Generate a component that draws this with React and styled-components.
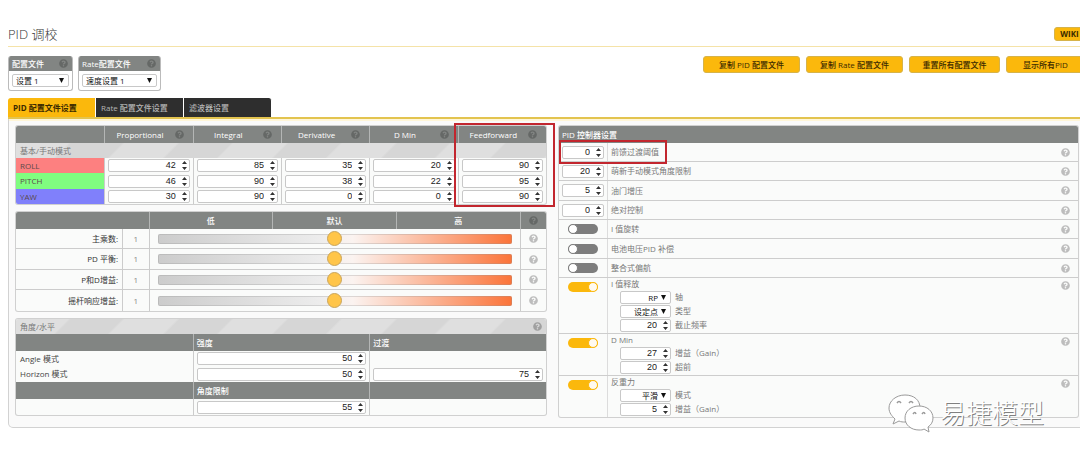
import { useState } from 'react'
import styled, { createGlobalStyle, css } from 'styled-components'
import { FaQuestionCircle } from 'react-icons/fa'

const axes = [
  { name: 'ROLL',  color: '#fd8080', values: [42, 85, 35, 20, 90] },
  { name: 'PITCH', color: '#80fd80', values: [46, 90, 38, 22, 95] },
  { name: 'YAW',   color: '#8080fb', values: [30, 90, 0, 0, 90] },
]
const terms = ['Proportional', 'Integral', 'Derivative', 'D Min', 'Feedforward']
const sliders = ['主乘数:', 'PD 平衡:', 'P和D增益:', '摇杆响应增益:']

const limits = [
  { id: 'ff', label: '前馈过渡阈值', value: 0 },
  { id: 'angle', label: '萌新手动模式角度限制', value: 20 },
  { id: 'throttle', label: '油门增压', value: 5 },
  { id: 'absolute', label: '绝对控制', value: 0 },
]
const switches = [
  { id: 'irot', label: 'I 值旋转' },
  { id: 'vbat', label: '电池电压PID 补偿' },
  { id: 'yaw', label: '整合式偏航' },
]
const groups = [
  {
    id: 'relax', label: 'I 值释放',
    fields: [
      { label: '轴', option: 'RP' },
      { label: '类型', option: '设定点' },
      { label: '截止频率', value: 20 },
    ],
  },
  {
    id: 'dmin', label: 'D Min',
    fields: [
      { label: '增益（Gain）', value: 27 },
      { label: '超前', value: 20 },
    ],
  },
  {
    id: 'gravity', label: '反重力',
    fields: [
      { label: '模式', option: '平滑' },
      { label: '增益（Gain）', value: 5 },
    ],
  },
]
const actions = [
  { label: '复制 PID 配置文件', width: 97 },
  { label: '复制 Rate 配置文件', width: 97 },
  { label: '重置所有配置文件', width: 91 },
  { label: '显示所有PID', width: 79 },
]
const tabs = ['PID 配置文件设置', 'Rate 配置文件设置', '滤波器设置']

function NumberField({ value, ...rest }) {
  return (
    <Field>
      <NumberInput type="number" defaultValue={value} {...rest} />
      <svg width="5" height="9" viewBox="0 0 5 9" fill="#333" aria-hidden="true">
        <path d="M0 3L2.5 0L5 3ZM0 6L2.5 9L5 6Z" />
      </svg>
    </Field>
  )
}

function SelectField({ option, $left, ...rest }) {
  return (
    <Field $select>
      <Select $left={$left} {...rest}>
        <option>{option}</option>
      </Select>
      <svg width="5" height="5" viewBox="0 0 5 5" fill="#111" aria-hidden="true">
        <path d="M0 0H5L2.5 5Z" />
      </svg>
    </Field>
  )
}

export default function App() {
  const [tab, setTab] = useState(0)

  return (
    <>
      <GlobalStyle />
      <Page>
        <TitleBar>
          <Title>PID 调校</Title>
          <WikiBtn>WIKI</WikiBtn>
        </TitleBar>

        <Toolbar>
          <Profile $width={65}>
            <ProfileHead><label htmlFor="profile">配置文件</label><Help $dark /></ProfileHead>
            <ProfileBody><SelectField $left id="profile" option="设置 1" /></ProfileBody>
          </Profile>
          <Profile $width={83}>
            <ProfileHead><label htmlFor="rate">Rate配置文件</label><Help $dark /></ProfileHead>
            <ProfileBody><SelectField $left id="rate" option="速度设置 1" /></ProfileBody>
          </Profile>
          <Actions>
            {actions.map(a => <ActionBtn key={a.label} $width={a.width}>{a.label}</ActionBtn>)}
          </Actions>
        </Toolbar>

        <Tabs>
          {tabs.map((t, i) => (
            <Tab key={t} $active={i === tab} onClick={() => setTab(i)}>{t}</Tab>
          ))}
        </Tabs>

        <Panel>
          <Column>
            <Card>
              <Table>
                <thead>
                  <tr>
                    <Th />
                    {terms.map(t => (
                      <Th key={t}><TermHead><span>{t}</span><Help $dark /></TermHead></Th>
                    ))}
                  </tr>
                </thead>
                <tbody>
                  <tr><Band colSpan={6}>基本/手动模式</Band></tr>
                </tbody>
                <tbody>
                  {axes.map(a => (
                    <ValueRow key={a.name}>
                      <AxisCell $color={a.color}>{a.name}</AxisCell>
                      {a.values.map((v, i) => (
                        <FieldCell key={terms[i]}>
                          <NumberField value={v} aria-label={`${a.name} ${terms[i]}`} />
                        </FieldCell>
                      ))}
                    </ValueRow>
                  ))}
                </tbody>
              </Table>
            </Card>
            <TermMark />

            <Card>
              <Table>
                <colgroup>
                  <Col $width="20%" /><Col $width="5%" />
                  <Col /><Col /><Col />
                  <Col $width="5%" />
                </colgroup>
                <thead>
                  <tr>
                    <Th colSpan={2} />
                    <Th>低</Th><Th>默认</Th><Th>高</Th>
                    <Th><Help $dark /></Th>
                  </tr>
                </thead>
                <tbody>
                  {sliders.map(s => (
                    <SliderRow key={s}>
                      <SliderCell $name>{s}</SliderCell>
                      <SliderCell $muted>1</SliderCell>
                      <SliderCell colSpan={3}>
                        <Range type="range" min="0" max="2" step="0.1" defaultValue="1" aria-label={s} />
                      </SliderCell>
                      <SliderCell><Help /></SliderCell>
                    </SliderRow>
                  ))}
                </tbody>
              </Table>
            </Card>

            <Card>
              <Table>
                <tbody>
                  <tr>
                    <Band colSpan={3}><BandInner>角度/水平<Help $mid /></BandInner></Band>
                  </tr>
                  <tr><Th /><Th $start>强度</Th><Th $start>过渡</Th></tr>
                </tbody>
                <tbody>
                  <ValueRow>
                    <NameCell>Angle 模式</NameCell>
                    <FieldCell><NumberField value={50} aria-label="Angle 强度" /></FieldCell>
                    <FieldCell />
                  </ValueRow>
                  <ValueRow>
                    <NameCell>Horizon 模式</NameCell>
                    <FieldCell><NumberField value={50} aria-label="Horizon 强度" /></FieldCell>
                    <FieldCell><NumberField value={75} aria-label="Horizon 过渡" /></FieldCell>
                  </ValueRow>
                  <tr><Th /><Th $start>角度限制</Th><Th /></tr>
                  <ValueRow>
                    <NameCell />
                    <FieldCell><NumberField value={55} aria-label="角度限制" /></FieldCell>
                    <FieldCell />
                  </ValueRow>
                </tbody>
              </Table>
            </Card>
          </Column>

          <Column>
            <Card>
              <CardHead>PID 控制器设置</CardHead>
              {limits.map(l => (
                <Option key={l.id}>
                  <Control><NumberField id={l.id} value={l.value} /></Control>
                  <OptionLabel htmlFor={l.id}>{l.label}</OptionLabel>
                  <Help />
                </Option>
              ))}
              {switches.map(s => (
                <Option key={s.id}>
                  <Control $toggle><Toggle id={s.id} type="checkbox" /></Control>
                  <OptionLabel htmlFor={s.id}>{s.label}</OptionLabel>
                  <Help />
                </Option>
              ))}
              {groups.map(g => (
                <Group key={g.id}>
                  <Control $toggle $top><Toggle id={g.id} type="checkbox" defaultChecked /></Control>
                  <GroupBody>
                    <GroupLabel htmlFor={g.id}>{g.label}</GroupLabel>
                    {g.fields.map(f => (
                      <SubField key={f.label}>
                        <SubControl>
                          {f.option ? <SelectField option={f.option} /> : <NumberField value={f.value} />}
                        </SubControl>
                        {f.label}
                      </SubField>
                    ))}
                  </GroupBody>
                  <Help />
                </Group>
              ))}
            </Card>
            <OptionMark />
          </Column>

          <Watermark>
            <svg width="46" height="40" viewBox="0 0 46 40" fill="#fff" stroke="#9a9a9a" strokeWidth="1">
              <path d="M17 2C8 2 1 8 1 15c0 5 3 8 6 11l-2 5 6-3c2 1 4 1 6 1 9 0 15-6 15-14S26 2 17 2Z" />
              <path d="M31 13c-8 0-14 5-14 12s6 12 14 12c2 0 4 0 5-1l5 3-1-5c3-2 5-5 5-9 0-7-6-12-14-12Z" />
              <g fill="none" strokeWidth="1.5">
                <path d="M9 10q2-3 4 0M21 10q2-3 4 0M25 21q2-3 3 0M34 21q2-3 3 0" />
              </g>
            </svg>
            <span>易捷模型</span>
          </Watermark>
        </Panel>
      </Page>
    </>
  )
}

const GlobalStyle = createGlobalStyle`
  *, *::before { box-sizing: border-box; }
  body {
    margin: 0; background: #fff; color: #444; overflow-x: hidden;
    font: 8px/12px "Open Sans", "Noto Sans CJK SC", sans-serif;
  }
  button, input, select { font: inherit; color: inherit; margin: 0; }
  svg { display: block; flex: none; }
`
const gold = '#fbb80c'

const Page = styled.main`
  margin-right: -5px; padding: 27px 0 30px 8px;
`
const TitleBar = styled.header`
  display: flex; align-items: center; justify-content: space-between;
  padding-bottom: 5px; border-bottom: 1px solid #f5e3a8;
`
const Title = styled.h1`
  margin: 0; font-size: 13px; line-height: 14px; font-weight: 300; color: #333;
`
const button = css`
  background: ${gold}; color: #3a2a00; border: 1px solid #d6b34a; border-radius: 3px;
  padding: 0; cursor: pointer; font-weight: 500; white-space: nowrap;
  &:hover { background: #ffcc3e; }
`
const WikiBtn = styled.button`
  ${button}
  width: 31px; height: 14px; line-height: 12px; font-weight: 700;
`
const Toolbar = styled.div`
  display: flex; align-items: flex-start; gap: 5px; margin-top: 9px;
`
const Actions = styled.div`
  display: flex; gap: 6px; margin-left: auto;
`
const ActionBtn = styled.button`
  ${button}
  width: ${p => p.$width}px; height: 17px;
`
const Profile = styled.div`
  width: ${p => p.$width}px; border-radius: 3px; overflow: hidden;
  border: 1px solid #bbb; border-top: 0;
`
const ProfileHead = styled.div`
  display: flex; align-items: center; justify-content: space-between;
  height: 15px; padding: 0 4px 0 3px;
  background: #828583; color: #fff; font-weight: 500;
`
const ProfileBody = styled.div`
  padding: 3px; height: 19px; display: grid;
`
const Help = styled(FaQuestionCircle)`
  width: 9px; height: 9px;
  color: ${p => p.$dark ? '#656866' : p.$mid ? '#a0a0a0' : '#bdbdbd'};
`

const Tabs = styled.nav`
  display: flex; margin-top: 7px; border-bottom: 2px solid #e3c44f;
`
const Tab = styled.button`
  width: 88px; height: 19px; padding: 0 0 0 5px; text-align: left;
  border: 0; border-right: 1px solid #fff; cursor: pointer; white-space: nowrap;
  background: ${p => p.$active ? gold : '#2e2e2e'};
  color: ${p => p.$active ? '#3a2a00' : '#b5b5b5'};
  font-weight: ${p => p.$active ? 700 : 500};
  &:first-child { border-top-left-radius: 3px; }
  &:last-child { border-top-right-radius: 3px; }
`

const Panel = styled.section`
  position: relative;
  display: grid; grid-template-columns: 530fr 519fr; gap: 13px; align-items: start;
  padding: 7px 6px 10px 7px;
  background: #fafafa; border: 1px solid #d2d2d2; border-top: 0;
  border-radius: 0 0 5px 5px;
  box-shadow: inset 0 2px 0 #fff6d8;
`
const Column = styled.div`
  position: relative;
  display: flex; flex-direction: column; gap: 8px; min-width: 0;
`
const Card = styled.div`
  border-radius: 2px; overflow: hidden; background: #fafbfa;
  box-shadow: 0 0 0 1px #d0d0d0;
`
const Table = styled.table`
  width: 100%; table-layout: fixed; border-collapse: separate; border-spacing: 0;
`
const Col = styled.col`width: ${p => p.$width || 'auto'};`

const Th = styled.th`
  height: 17px; padding: 0; background: #828583; color: #fff; font-weight: 500;
  text-align: ${p => p.$start ? 'left' : 'center'};
  padding-left: ${p => p.$start ? '3px' : 0};
  & + & { border-left: 1px solid #b4b6b5; }
  > svg { margin: 0 auto; }
`
const TermHead = styled.div`
  display: flex; align-items: center; padding-right: 9px;
  span { flex: 1; }
`
const Band = styled.td`
  height: 15px; padding: 0 4px; color: #777;
  background: repeating-linear-gradient(135deg, #dfdfdf 0 37px, #d6d6d6 39px 75px, #dfdfdf 77px);
`
const BandInner = styled.div`
  display: flex; align-items: center; justify-content: space-between;
`
const ValueRow = styled.tr`
  height: 15px;
  &:nth-child(even) { height: 16px; }
`
const AxisCell = styled.td`
  padding: 0 4px; background: ${p => p.$color}; color: #5c4a4a;
`
const NameCell = styled.td`padding: 0 4px;`
const FieldCell = styled.td`
  padding: 0 3px; border-left: 1px solid #ccc;
`

const Field = styled.span`
  display: flex; align-items: center; gap: ${p => p.$select ? '3px' : '6px'};
  width: 100%; height: 13px; padding-right: ${p => p.$select ? '4px' : '2px'};
  background: #fff; border: 1px solid #c8c8c8; border-radius: 2px;
`
const NumberInput = styled.input`
  flex: 1; width: 0; min-width: 0; height: 11px; padding: 0; border: 0; outline: 0;
  font-family: "Liberation Sans", sans-serif; font-size: 9px; line-height: 11px;
  background: none; text-align: right; color: #222; appearance: textfield;
  &::-webkit-inner-spin-button { appearance: none; margin: 0; }
`
const Select = styled.select`
  flex: 1; width: 0; min-width: 0; height: 11px; border: 0; outline: 0; appearance: none;
  background: none; color: #111; line-height: 11px;
  padding: ${p => p.$left ? '0 0 0 3px' : 0};
  text-align-last: ${p => p.$left ? 'left' : 'right'};
`

const SliderRow = styled.tr`
  height: 20px;
  &:nth-child(even) { height: 21px; }
  &:last-child td { border-bottom: 0; }
`
const SliderCell = styled.td`
  padding: ${p => p.$name ? '0 4px' : '0 8px'};
  text-align: ${p => p.$name ? 'right' : 'center'};
  color: ${p => p.$muted ? '#888' : '#333'};
  border-bottom: 1px solid #ccc;
  & + & { border-left: 1px solid #ccc; }
`
const Range = styled.input`
  display: block; width: 100%; height: 15px; appearance: none; background: none;
  &::-webkit-slider-runnable-track {
    height: 10px; border-radius: 2px;
    box-shadow: inset 0 0 0 1px rgba(150, 150, 150, 0.3);
    background: linear-gradient(90deg, #ccc, #ececec 45%, #fbf3f0 55%, #fb7439);
  }
  &::-webkit-slider-thumb {
    appearance: none; width: 15px; height: 15px; margin-top: -3px;
    background: #ffc549; border: 1px solid #c9a55c; border-radius: 50%;
  }
`

const CardHead = styled.h2`
  margin: 0; height: 17px; padding-left: 3px;
  font-size: 8px; line-height: 17px; font-weight: 500;
  background: #828583; color: #fff;
`
const Option = styled.div`
  display: flex; align-items: center; height: 19px; padding-right: 8px;
  border-bottom: 1px solid #cdcdcd; color: #777;
  &:nth-child(3n + 1) { height: 20px; }
`
const Control = styled.div`
  width: 49px; align-self: stretch; flex: none;
  padding: ${p => p.$toggle ? '0 9px' : '0 3px'};
  padding-top: ${p => p.$top ? '4px' : 0};
  border-right: 1px solid #dcdcdc;
  display: flex; align-items: ${p => p.$top ? 'flex-start' : 'center'};
`
const OptionLabel = styled.label`flex: 1; padding-left: 3px;`

const Toggle = styled.input`
  appearance: none; flex: none; width: 30px; height: 10px; border-radius: 5px;
  background: #7d7d7d; display: flex; justify-content: flex-start;
  &::before {
    content: ''; width: 10px; height: 10px; border-radius: 50%;
    background: #fff; border: 1px solid #7d7d7d;
  }
  &:checked { background: ${gold}; justify-content: flex-end; }
  &:checked::before { border-color: ${gold}; background: #fffaf0; }
`
const Group = styled.div`
  display: flex; padding-right: 8px; color: #777;
  border-bottom: 1px solid #cdcdcd;
  > svg { margin-top: 3px; }
  &:last-child { border-bottom: 0; }
`
const GroupBody = styled.div`flex: 1; padding: 0 0 1px 3px;`
const GroupLabel = styled.label`display: block;`

const SubField = styled.label`
  display: flex; align-items: center; gap: 4px; height: 14px; padding-left: 9px;
`
const SubControl = styled.span`width: 51px;`

// red frames drawn over the highlighted settings
const mark = css`
  position: absolute; border: 2px solid #c2262e; pointer-events: none;
`
const TermMark = styled.div`
  ${mark}
  top: -3px; right: -9px; width: calc(100% / 6 + 13px); height: 84px;
`
const OptionMark = styled.div`
  ${mark}
  top: 14px; left: 0; width: 108px; height: 24px;
`
const Watermark = styled.div`
  position: absolute; right: 40px; bottom: -6px;
  display: flex; align-items: center; gap: 6px;
  font-size: 26px; line-height: 36px; font-weight: 300; color: #fff;
  text-shadow: 1px 1px 0 #808080;
`
